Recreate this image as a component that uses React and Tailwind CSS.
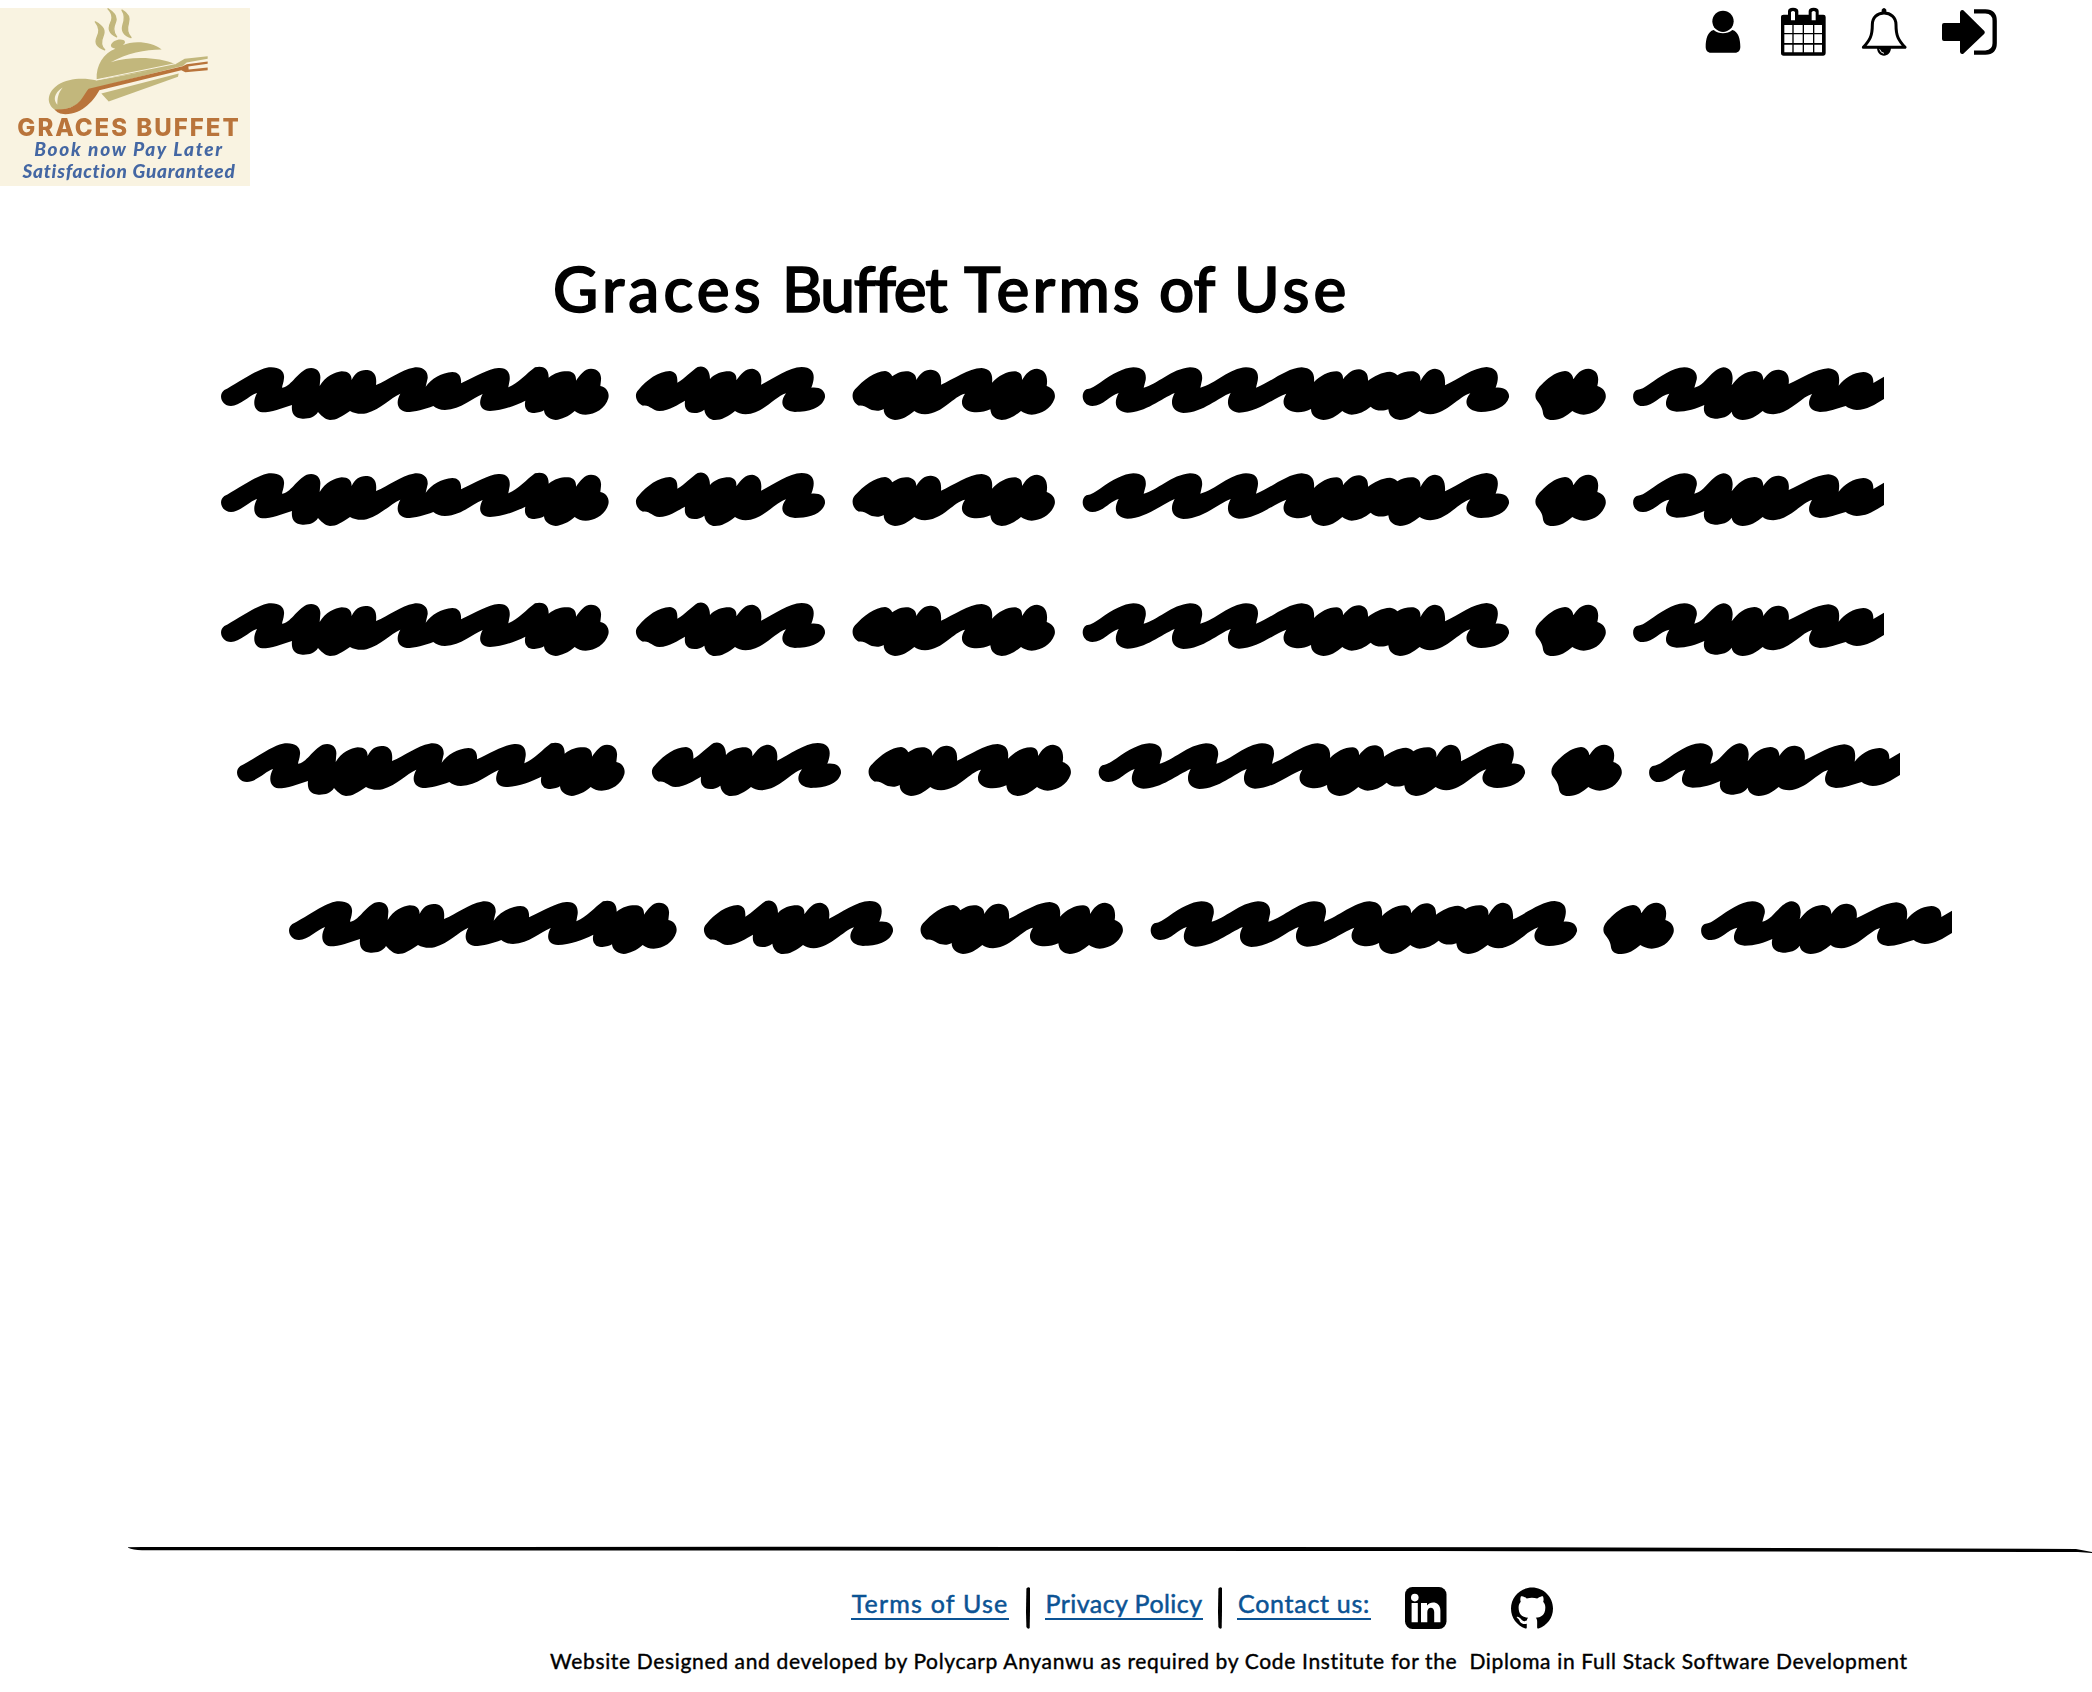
import React from "react";

const SCRIBBLE_WORDS = [
  { x: 0, d: "M48 138 C20 138 8 105 28 90 C60 75 120 30 155 23 C190 18 210 32 207 55 C206 68 202 76 201 83 C225 82 245 40 275 26 C300 18 318 32 316 55 L314 78 C330 50 360 36 380 34 C400 34 410 44 410 60 C420 38 435 28 458 30 C480 34 486 50 483 75 C520 60 560 28 595 23 C625 18 640 35 638 55 L632 80 C650 55 680 38 712 36 C730 36 740 48 738 70 C780 50 820 26 850 24 C878 22 886 40 884 60 L880 82 C910 70 935 40 960 22 C980 16 1002 22 1001 53 C1020 38 1040 33 1060 34 C1078 36 1084 48 1083 62 C1095 45 1108 26 1128 26 C1150 26 1160 42 1158 60 L1156 78 C1175 82 1184 98 1180 115 C1172 145 1140 164 1112 164 C1098 164 1088 160 1079 153 C1060 170 1040 178 1022 180 C1000 178 988 165 987 151 C978 158 955 162 940 155 C930 148 928 136 931 122 C900 138 860 152 825 153 C795 152 788 130 803 102 C770 115 740 148 690 150 C675 150 662 144 655 138 C630 148 600 156 575 156 C545 152 542 125 556 101 C525 115 500 145 455 160 C435 164 418 160 405 153 C380 170 365 180 345 180 C328 178 318 165 309 156 C300 172 280 177 262 176 C238 174 228 160 231 135 C200 145 170 157 142 157 C115 152 112 125 126 99 C105 105 75 138 48 138Z" },
  { x: 1200, d: "M84 137 C65 130 55 105 70 90 C95 60 130 34 165 33 C185 36 188 50 187 68 C210 55 230 32 248 21 C265 15 285 25 285 57 C300 40 325 33 345 34 C362 38 365 48 364 61 C378 40 392 26 412 26 C435 30 442 48 438 74 C475 56 520 22 560 21 C600 22 602 50 589 83 C615 80 632 92 630 112 C622 145 580 156 540 156 C505 154 490 130 513 100 C480 110 445 160 392 163 C378 163 368 158 360 153 C340 170 320 180 300 180 C285 180 270 168 268 149 C255 160 235 162 222 156 C210 148 208 138 210 122 C190 132 165 152 133 153 C110 152 105 134 84 137Z" },
  { x: 1200, d: "M732 137 C715 130 705 105 720 88 C745 60 780 34 810 33 C822 34 828 42 832 49 C848 38 860 34 880 34 C895 38 904 45 904 60 C915 40 930 28 948 29 C975 32 980 50 978 74 C1015 58 1060 25 1100 24 C1128 26 1134 45 1131 68 C1150 48 1175 34 1200 34 C1218 36 1222 46 1221 60 C1232 42 1245 26 1266 26 C1290 28 1300 48 1295 78 C1315 84 1324 102 1318 118 C1308 145 1280 163 1250 164 C1235 163 1225 158 1218 153 C1200 168 1180 180 1160 180 C1140 178 1128 168 1126 148 C1110 156 1090 158 1072 156 C1045 152 1030 130 1050 101 C1015 108 985 160 930 163 C915 162 905 158 898 153 C880 168 860 180 840 180 C820 178 806 165 806 147 C795 154 780 154 765 148 C752 140 745 136 732 137Z" },
  { x: 2580, d: "M52 138 C22 138 14 100 34 88 C50 85 60 78 75 68 C115 40 145 24 175 22 C205 22 215 38 212 60 L206 83 C245 75 290 26 345 22 C375 22 384 40 381 60 L376 83 C420 72 465 24 513 22 C545 22 552 40 548 62 L543 83 C585 68 635 24 680 22 C708 24 720 38 717 66 C735 48 760 34 785 34 C800 36 805 46 804 58 C818 40 832 28 852 28 C870 30 880 40 879 62 C898 48 920 36 945 35 C955 36 962 40 967 46 C980 36 1000 33 1015 34 C1032 38 1038 48 1036 64 C1048 42 1062 26 1080 26 C1104 28 1112 48 1110 76 C1150 58 1195 22 1235 21 C1268 24 1276 45 1262 83 C1290 80 1304 95 1302 112 C1294 142 1255 156 1218 156 C1180 154 1160 130 1186 100 C1150 110 1118 160 1066 163 C1052 163 1042 158 1034 153 C1015 168 995 180 975 180 C955 178 942 168 940 148 C925 154 900 154 887 140 C870 155 850 163 830 164 C818 163 808 158 802 153 C785 168 765 180 745 180 C722 178 708 165 708 147 C690 156 675 158 660 156 C630 152 615 130 634 101 C595 115 545 158 492 158 C460 155 450 130 467 99 C430 112 385 158 325 159 C292 156 282 130 299 99 C260 115 210 158 157 158 C122 154 114 130 131 99 C105 105 85 138 52 138Z" },
  { x: 3900, d: "M84 160 C82 138 72 132 63 117 C55 95 75 78 85 68 C108 48 125 35 150 33 C165 34 174 45 175 58 C185 42 198 26 220 26 C244 28 255 45 247 78 C268 84 276 102 271 118 C260 148 232 164 206 164 C190 163 180 158 172 153 C155 168 135 180 115 180 C95 182 86 172 84 160Z" },
  { x: 3900, d: "M385 138 C352 140 346 98 365 90 C378 88 390 82 400 74 C440 48 470 24 508 22 C540 22 550 45 544 62 L538 83 C570 78 590 26 625 22 C650 24 658 45 650 76 C668 52 690 34 718 33 C738 34 745 46 745 60 C758 40 772 28 792 29 C818 32 824 50 821 72 C860 56 900 27 940 25 C970 28 976 45 971 77 C988 54 1015 38 1045 36 C1068 38 1076 50 1075 69 L1107 50 L1107 117 C1080 134 1055 150 1025 150 C1010 149 1000 144 992 138 C965 146 940 156 915 156 C885 154 872 135 891 102 C860 110 825 160 775 163 C762 162 750 160 743 153 C725 168 705 180 683 180 C665 178 652 170 650 155 C640 170 620 176 600 176 C575 174 562 160 568 135 C545 146 515 155 485 155 C450 152 445 130 463 101 C435 105 415 138 385 138Z" },
];

function ScribbleLine({ className }) {
  return (
    <svg viewBox="0 0 5007 180" className={`block h-[60px] w-[1669px] ${className}`} aria-hidden="true">
      {SCRIBBLE_WORDS.map((w, i) => (
        <path key={i} d={w.d} transform={`translate(${w.x} 0)`} />
      ))}
    </svg>
  );
}

function Logo() {
  return (
    <div className="mt-2 flex h-[178px] w-[250px] flex-col items-center overflow-hidden bg-[#f9f3e1]">
      <div className="flex flex-col items-center blur-[0.6px]">
        <svg viewBox="0 24 750 320" className="block h-[107px] w-[250px]" aria-hidden="true">
          <g fill="#c2b77c">
            <g stroke="#c2b77c" strokeWidth="4" strokeLinejoin="round">
              <path d="M286 65 C312 80 316 92 309 108 C302 124 303 138 314 149 C290 140 284 128 291 112 C301 94 298 80 286 65Z" />
              <path d="M324 26 C350 42 352 56 345 70 C337 88 342 100 350 110 C326 100 324 84 332 68 C340 52 336 38 324 26Z" />
              <path d="M366 30 C388 42 390 56 385 70 C379 88 384 102 393 112 C370 106 364 90 369 74 C376 54 374 42 366 30Z" />
            </g>
            <path d="M333 134 C338 122 356 114 372 120 C378 126 374 130 368 135 C400 120 455 124 485 148 C435 148 380 160 332 186 C400 166 480 172 526 192 L554 176 L623 168 L623 176 L560 187 L549 197 L290 238 C288 195 310 160 346 146 C336 144 331 140 333 134Z" />
            <path d="M290 241 L530 196 L552 196 L268 268 C250 282 252 326 166 330 C136 310 142 276 174 254 C206 234 250 232 290 241Z" />
            <path d="M304 280 L536 220 L534 230 L326 304Z" />
          </g>
          <path d="M288 239 L528 190" stroke="#f9f3e1" strokeWidth="3" />
          <path d="M266 266 L548 198 L560 192 L623 184 L623 191 L565 199 L566 208 L623 202 L623 210 L556 216 L544 210 L298 270 C284 296 250 342 196 342 C180 342 170 336 164 328 C240 330 244 292 266 266Z" fill="#b9743b" />
          <path d="M188 262 C160 280 160 300 172 314 C172 294 174 280 188 262Z" fill="#f9f3e1" />
        </svg>
        <p className="ml-2 mt-px whitespace-nowrap font-['Inter'] text-[24px] font-extrabold leading-[23px] tracking-[2px] text-[#b9743b]">GRACES BUFFET</p>
        <p className="ml-2 mt-px whitespace-nowrap font-['Lato','Liberation_Sans'] text-[19px] font-black italic leading-[18px] tracking-[1.7px] text-[#4467a3]">Book now Pay Later</p>
        <p className="ml-2 mt-px whitespace-nowrap font-['Lato','Liberation_Sans'] text-[19px] font-black italic leading-[23px] tracking-[0.75px] text-[#4467a3]">Satisfaction Guaranteed</p>
      </div>
    </div>
  );
}

function UserIcon() {
  return (
    <svg viewBox="46 30 108 130" className="mt-[10px] h-[43.33px] w-9" aria-label="Account">
      <circle cx="100" cy="64" r="32" />
      <path d="M72 90 C88 103 112 103 128 90 C146 94 152 118 152 140 C152 151 146 158 136 158 H64 C54 158 48 151 48 140 C48 118 54 94 72 90Z" />
    </svg>
  );
}

function CalendarIcon() {
  return (
    <svg viewBox="273 21 135 147" className="ml-[39.67px] mt-[7px] h-[49px] w-[45px]" aria-label="Calendar">
      <path fillRule="evenodd" d="M281 44 H294 V34 Q294 23 309 23 Q325 23 325 34 V44 H356 V34 Q356 23 371 23 Q386 23 386 34 V44 H400 Q407 44 407 51 V160 Q407 167 400 167 H281 Q273 167 273 160 V51 Q273 44 281 44Z M303 36 V61 H315 V36 Q309 30 303 36Z M365 36 V61 H377 V36 Q371 30 365 36Z M283 75 V99 H307 V75Z M311 75 V99 H338 V75Z M342 75 V99 H369 V75Z M373 75 V99 H396 V75Z M283 103 V129 H307 V103Z M311 103 V129 H338 V103Z M342 103 V129 H369 V103Z M373 103 V129 H396 V103Z M283 134 V157 H307 V134Z M311 134 V157 H338 V134Z M342 134 V157 H369 V134Z M373 134 V157 H396 V134Z" />
    </svg>
  );
}

function BellIcon() {
  return (
    <svg viewBox="513 21 138 147" className="ml-[35px] mt-[7px] h-[49px] w-[46px]" aria-label="Notifications">
      <path d="M520 142 C540 120 547 108 547 74 C547 52 562 39 582 39 C602 39 618 52 618 74 C618 108 625 120 645 142Z" fill="none" stroke="#000" strokeWidth="9" strokeLinejoin="round" />
      <path d="M575 38 V29 Q582 19 589 29 V38Z M561 144 H603 C602 158 594 167 582 167 C570 167 562 158 561 144Z" />
      <path d="M569 148 Q572 159 582 160" fill="none" stroke="#fff" strokeWidth="3" />
    </svg>
  );
}

function SignInIcon() {
  return (
    <svg viewBox="756 24 165 144" className="ml-[35px] mt-2 h-12 w-[55px]" aria-label="Sign in">
      <path d="M762 69 H810 V37 Q812 28 820 31 L883 93 Q886 97 883 101 L820 161 Q812 164 810 156 V123 H762 Q756 123 756 117 V75 Q756 69 762 69Z" />
      <path d="M852 34 H886 Q914 35 914 62 V130 Q914 157 886 158 H852" fill="none" stroke="#000" strokeWidth="13" />
    </svg>
  );
}

function LinkedInIcon() {
  return (
    <svg viewBox="0 0 42 42" className="ml-[34px] h-[42px] w-[42px]" aria-label="LinkedIn">
      <rect width="41.5" height="42" rx="7.5" />
      <g fill="#fff">
        <circle cx="9.8" cy="10.6" r="3.8" />
        <path d="M6.6 16H12.8V35.2H6.6Z M16 16H22V18.6C25.5 13.6 35.4 14.3 35.4 23.5V35.2H29.2V25C29.2 19 22.3 19.4 22.3 25V35.2H16Z" />
      </g>
    </svg>
  );
}

function GitHubIcon() {
  return (
    <svg viewBox="0 0 24 24" className="ml-[64px] h-[42px] w-[42px]" aria-label="GitHub">
      <path d="M12 .297c-6.63 0-12 5.373-12 12 0 5.303 3.438 9.8 8.205 11.385.6.113.82-.258.82-.577 0-.285-.01-1.04-.015-2.04-3.338.724-4.042-1.61-4.042-1.61C4.422 18.07 3.633 17.7 3.633 17.7c-1.087-.744.084-.729.084-.729 1.205.084 1.838 1.236 1.838 1.236 1.07 1.835 2.809 1.305 3.495.998.108-.776.417-1.305.76-1.605-2.665-.3-5.466-1.332-5.466-5.93 0-1.31.465-2.38 1.235-3.22-.135-.303-.54-1.523.105-3.176 0 0 1.005-.322 3.3 1.23.96-.267 1.98-.399 3-.405 1.02.006 2.04.138 3 .405 2.28-1.552 3.285-1.23 3.285-1.23.645 1.653.24 2.873.12 3.176.765.84 1.23 1.91 1.23 3.22 0 4.61-2.805 5.625-5.475 5.92.42.36.81 1.096.81 2.22 0 1.606-.015 2.896-.015 3.286 0 .315.21.69.825.57C20.565 22.092 24 17.592 24 12.297c0-6.627-5.373-12-12-12" />
    </svg>
  );
}

function FooterLink({ className, children }) {
  return (
    <a href="#" className={`mt-[2px] flex h-[31px] items-center justify-center whitespace-nowrap border-b-2 border-[#0b5394] pt-px text-[25px] text-[#0b5394] [-webkit-text-stroke:0.5px_#0b5394] ${className}`}>
      {children}
    </a>
  );
}

function Separator({ className }) {
  return (
    <svg viewBox="0 0 4 42" className={`h-[42px] w-1 ${className}`} aria-hidden="true">
      <path d="M.4 1.5Q2.5-.5 4 1L4 24 3.7 41Q2 43 .4 40L0 25Z" />
    </svg>
  );
}

export default function App() {
  return (
    <div className="flex h-[1692px] w-[2092px] flex-col overflow-hidden bg-white font-['Lato','Liberation_Sans',sans-serif] text-black">
      <header className="flex h-[186px] items-start justify-between pr-[95px]">
        <Logo />
        <nav className="flex items-start">
          <UserIcon />
          <CalendarIcon />
          <BellIcon />
          <SignInIcon />
        </nav>
      </header>

      <main className="flex flex-1 flex-col">
        <h1 className="ml-[553px] mt-[62px] flex h-[80px] items-center whitespace-nowrap text-[62px] font-medium leading-none [-webkit-text-stroke:1.6px_#000] [paint-order:stroke_fill] [stroke-linejoin:round]">
          <span className="w-[229px] tracking-[4.2px]">Graces </span>
          <span className="w-[182px] tracking-[-1.3px]">Buffet </span>
          <span className="w-[195px] tracking-[3.2px]">Terms </span>
          <span className="w-[75px]">of </span>
          <span className="tracking-[4.2px]">Use</span>
        </h1>
        <div className="mt-[32px] flex flex-col pl-[215px]">
          <ScribbleLine className="" />
          <ScribbleLine className="mt-[46px]" />
          <ScribbleLine className="mt-[70px]" />
          <ScribbleLine className="ml-4 mt-20" />
          <ScribbleLine className="ml-[68px] mt-[98px]" />
        </div>
      </main>

      <footer className="h-[146px]">
        <svg viewBox="0 0 1964 8" className="ml-[128px] block h-2 w-[1964px]" aria-hidden="true">
          <path d="M0 1.2L14 1 700 .8 1400 1.2 1948 3 1964 6V7L1950 6 1300 5 700 4.6 14 4.2Q5 4 0 1.8Z" />
        </svg>
        <div className="ml-[851px] mt-[33px] flex items-start">
          <FooterLink className="w-[158px] tracking-[1.2px]">Terms of Use</FooterLink>
          <Separator className="ml-[17px]" />
          <FooterLink className="ml-[15px] w-[158px] tracking-[0.45px]">Privacy Policy</FooterLink>
          <Separator className="ml-[15px]" />
          <FooterLink className="ml-[15px] w-[134px] tracking-[0.7px]">Contact us:</FooterLink>
          <LinkedInIcon />
          <GitHubIcon />
        </div>
        <p className="ml-[550px] mt-[18px] w-max whitespace-pre text-[21px] leading-[28px] tracking-[0.66px] [-webkit-text-stroke:0.4px_#000]">Website Designed and developed by Polycarp Anyanwu as required by Code Institute for the  Diploma in Full Stack Software Development</p>
      </footer>
    </div>
  );
}
